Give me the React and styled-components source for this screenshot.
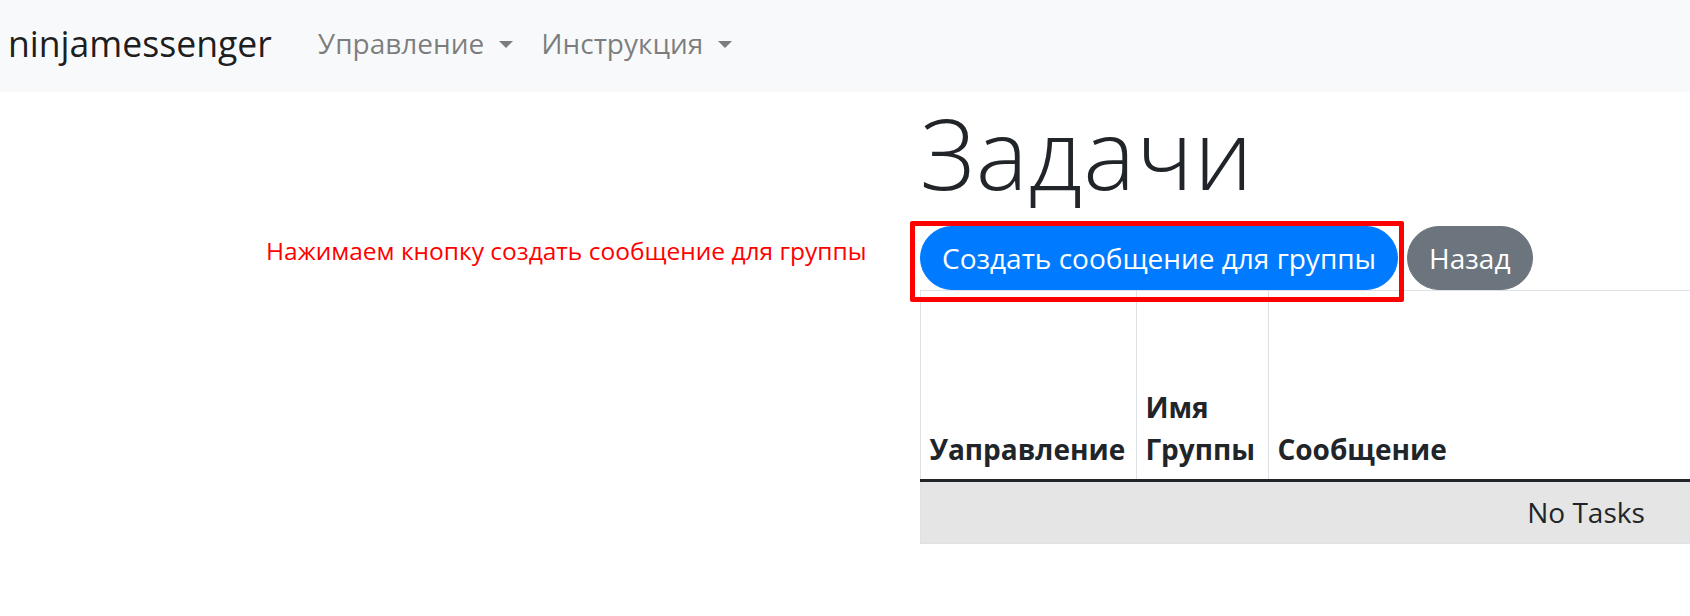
import React from "react";
import styled, { createGlobalStyle } from "styled-components";

const GlobalStyle = createGlobalStyle`
  *, *::before, *::after { box-sizing: border-box; }
  html, body { margin: 0; padding: 0; }
  body {
    width: 1690px;
    overflow: hidden;
    background: #ffffff;
    color: #212529;
    font-family: "Open Sans", "Noto Sans", sans-serif;
    font-size: 28px;
    line-height: 1.5;
  }
`;

const Navbar = styled.nav`
  height: 92px;
  background: #f8f9fa;
  display: flex;
  align-items: center;
  padding: 0 8px 6px 8px;
`;

const Brand = styled.a`
  font-size: 35.6px;
  line-height: 52.5px;
  color: rgba(0, 0, 0, 0.9);
  text-decoration: none;
  margin-right: 32px;
  white-space: nowrap;
`;

const NavList = styled.div`
  display: flex;
  align-items: center;
`;

const NavLink = styled.a`
  font-size: 28px;
  line-height: 42px;
  color: rgba(0, 0, 0, 0.5);
  padding: 0 14px;
  text-decoration: none;
  white-space: nowrap;
  display: inline-flex;
  align-items: center;

  &::after {
    content: "";
    display: inline-block;
    margin-left: 15px;
    margin-top: 2px;
    border-top: 7.5px solid rgba(0, 0, 0, 0.5);
    border-left: 7.5px solid transparent;
    border-right: 7.5px solid transparent;
    border-bottom: 0;
  }
`;

const Main = styled.main`
  display: grid;
  grid-template-columns: 920px 1332px;
`;

const NoteColumn = styled.div`
  padding-top: 142px;
  padding-left: 266px;
`;

const Note = styled.div`
  font-size: 24.5px;
  line-height: 1.362;
  color: #ff0000;
  white-space: nowrap;
`;

const Content = styled.div`
  padding-top: 2px;
`;

const Title = styled.h1`
  margin: 0 0 14px 0;
  font-size: 98px;
  font-weight: 300;
  line-height: 1.2;
  letter-spacing: 1px;
  color: #212529;
`;

const ButtonRow = styled.div`
  display: flex;
  gap: 9px;
  align-items: flex-start;
`;

const Highlight = styled.div`
  position: relative;
  display: flex;
`;

const HighlightFrame = styled.span`
  position: absolute;
  left: -10px;
  top: -5px;
  right: -6px;
  bottom: -12px;
  border: 5px solid #ff0000;
  border-radius: 2px;
  pointer-events: none;
`;

const Button = styled.button`
  font-family: inherit;
  font-size: 28px;
  line-height: 42px;
  padding: 10px 21px;
  border: 1.5px solid ${(p) => p.$bg};
  background: ${(p) => p.$bg};
  color: #ffffff;
  border-radius: 999px;
  white-space: nowrap;
  cursor: pointer;
`;

const Table = styled.table`
  width: 1332px;
  border-collapse: collapse;
  color: #212529;
`;

const HeadRow = styled.tr`
  height: 190px;
`;

const Th = styled.th`
  width: ${(p) => p.$w || "auto"};
  padding: 8px 8.4px 9px 8.4px;
  border: 1px solid #dee2e6;
  border-bottom: 3.5px solid #212529;
  vertical-align: bottom;
  text-align: left;
  font-weight: 700;
  font-size: 28px;
  line-height: 42px;
`;

const EmptyCell = styled.td`
  padding: 9px 8.4px 10px 8.4px;
  border: 1px solid #dee2e6;
  background: #e5e5e5;
  text-align: center;
  font-size: 28px;
  line-height: 42px;
`;

export default function App() {
  return (
    <>
      <GlobalStyle />
      <Navbar>
        <Brand href="#">ninjamessenger</Brand>
        <NavList>
          <NavLink href="#">Управление</NavLink>
          <NavLink href="#">Инструкция</NavLink>
        </NavList>
      </Navbar>
      <Main>
        <NoteColumn>
          <Note>Нажимаем кнопку создать сообщение для группы</Note>
        </NoteColumn>
        <Content>
          <Title>Задачи</Title>
          <ButtonRow>
            <Highlight>
              <Button $bg="#007bff">Создать сообщение для группы</Button>
              <HighlightFrame />
            </Highlight>
            <Button $bg="#6c757d">Назад</Button>
          </ButtonRow>
          <Table>
            <thead>
              <HeadRow>
                <Th $w="216px">Уаправление</Th>
                <Th $w="132px">Имя Группы</Th>
                <Th>Сообщение</Th>
              </HeadRow>
            </thead>
            <tbody>
              <tr>
                <EmptyCell colSpan={3}>No Tasks</EmptyCell>
              </tr>
            </tbody>
          </Table>
        </Content>
      </Main>
    </>
  );
}
